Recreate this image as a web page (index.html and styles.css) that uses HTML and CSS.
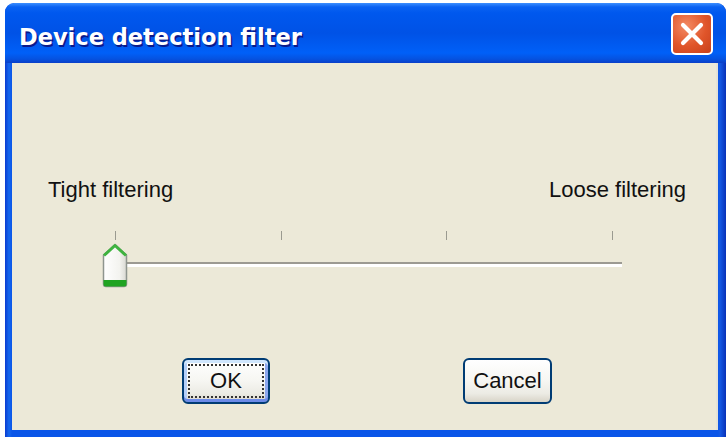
FILE: index.html
```html
<!DOCTYPE html>
<html>
<head>
<meta charset="utf-8">
<title>Device detection filter</title>
<link rel="stylesheet" href="styles.css">
</head>
<body>
<div class="window">
  <div class="titlebar">
    <span class="title">Device detection filter</span>
    <button class="close" aria-label="Close">
      <svg width="26" height="26" viewBox="0 0 26 26"><path d="M4 4 L22 22 M22 4 L4 22" stroke="#fff" stroke-width="4.2" stroke-linecap="round"/></svg>
    </button>
  </div>
  <div class="body">
    <div class="labels">
      <span>Tight filtering</span>
      <span>Loose filtering</span>
    </div>
    <div class="slider">
      <div class="ticks"><i></i><i></i><i></i><i></i></div>
      <div class="track"></div>
      <svg class="thumb" width="26" height="45" viewBox="0 0 26 45">
        <defs>
          <linearGradient id="tg" x1="0" x2="1" y1="0" y2="0">
            <stop offset="0" stop-color="#ffffff"/>
            <stop offset="0.7" stop-color="#f3f3ef"/>
            <stop offset="1" stop-color="#d8d8d2"/>
          </linearGradient>
        </defs>
        <path d="M1.5 12 L13 1.5 L24.5 12 L24.5 41 Q24.5 43.5 22 43.5 L4 43.5 Q1.5 43.5 1.5 41 Z" fill="url(#tg)" stroke="#8e958e" stroke-width="1.5"/>
        <path d="M2 12.5 L13 2.5 L24 12.5" fill="none" stroke="#3fb33f" stroke-width="3" stroke-linejoin="round"/>
        <path d="M1.5 37 L24.5 37 L24.5 41 Q24.5 43.5 22 43.5 L4 43.5 Q1.5 43.5 1.5 41 Z" fill="#20a321"/>
      </svg>
    </div>
    <div class="buttons">
      <button class="btn default"><span>OK</span></button>
      <button class="btn"><span>Cancel</span></button>
    </div>
  </div>
</div>
</body>
</html>
```
FILE: styles.css
```css
html, body {
  margin: 0;
  padding: 0;
  background: #ffffff;
}
body {
  width: 726px;
  height: 437px;
  overflow: hidden;
  font-family: "Liberation Sans", Arial, sans-serif;
}
.window {
  margin: 3px 0 0 5px;
  width: 721px;
  height: 434px;
  border-radius: 9px 9px 0 0;
  background: linear-gradient(90deg, #0a3bd0 0, #1467ee 4px, #0a55e8 7px, #0a55e8 calc(100% - 8px), #1459e4 calc(100% - 6px), #0831b8 100%);
  display: flex;
  flex-direction: column;
  overflow: hidden;
}
.titlebar {
  height: 60px;
  flex: none;
  display: flex;
  align-items: center;
  padding: 0 13px 0 14px;
  background: linear-gradient(180deg, #3c8fff 0, #0a62f2 4px, #0058ee 10px, #0052e6 30px, #0060f8 50px, #0552e0 56px, #0a3fc8 60px);
  border-radius: 9px 9px 0 0;
}
.title {
  flex: 1;
  color: #ffffff;
  font-family: "DejaVu Sans", sans-serif;
  font-weight: bold;
  font-size: 22.5px;
  text-shadow: 1.5px 1.5px 0 #0a1a8c;
  padding-top: 7px;
}
.close {
  width: 42px;
  height: 42px;
  margin: 0;
  padding: 0;
  border: 2px solid #ffffff;
  border-radius: 5px;
  background: radial-gradient(circle at 35% 30%, #f38a64 0, #e0552a 55%, #c7401c 100%);
  display: flex;
  align-items: center;
  justify-content: center;
  box-sizing: border-box;
  margin-top: 1px;
}
.body {
  flex: 1;
  margin: 0 8px 7px 7px;
  background: #ece9d8;
  display: flex;
  flex-direction: column;
  box-shadow: inset -2px 0 0 #e4e2d8;
}
.labels {
  display: flex;
  justify-content: space-between;
  padding: 113px 32px 0 36px;
  font-size: 22px;
  color: #111111;
  line-height: 28px;
}
.slider {
  position: relative;
  margin-top: 27px;
  height: 64px;
}
.ticks {
  display: flex;
  justify-content: space-between;
  margin-left: 103px;
  width: 498px;
  height: 9px;
}
.ticks i {
  width: 1px;
  height: 9px;
  background: #9a9a90;
}
.track {
  margin: 22px 0 0 103px;
  width: 507px;
  height: 2px;
  background: #9c9a92;
  border-bottom: 3px solid #ffffff;
}
.thumb {
  position: absolute;
  left: 90px;
  top: 12px;
}
.buttons {
  display: flex;
  padding: 63px 0 0 170px;
  gap: 193px;
}
.btn {
  height: 46px;
  margin: 0;
  padding: 0;
  border: 2px solid #003c74;
  border-radius: 6px;
  background: linear-gradient(180deg, #ffffff 0, #f6f6f2 50%, #ecebe4 80%, #d8d4c8 100%);
  font-family: "Liberation Sans", Arial, sans-serif;
  font-size: 22px;
  color: #111111;
  box-sizing: border-box;
  display: flex;
  align-items: center;
  justify-content: center;
}
.btn:first-child { width: 88px; }
.btn:last-child { width: 89px; }
.btn.default {
  box-shadow: inset 0 3px 0 #cfe6fd, inset 0 -3px 0 #6d8be8, inset 3px 0 0 #b4cff8, inset -3px 0 0 #8da8ef;
}
.btn.default span {
  display: flex;
  align-items: center;
  justify-content: center;
  width: 76px;
  height: 34px;
  border: 2px dotted #333333;
  box-sizing: border-box;
}
```
